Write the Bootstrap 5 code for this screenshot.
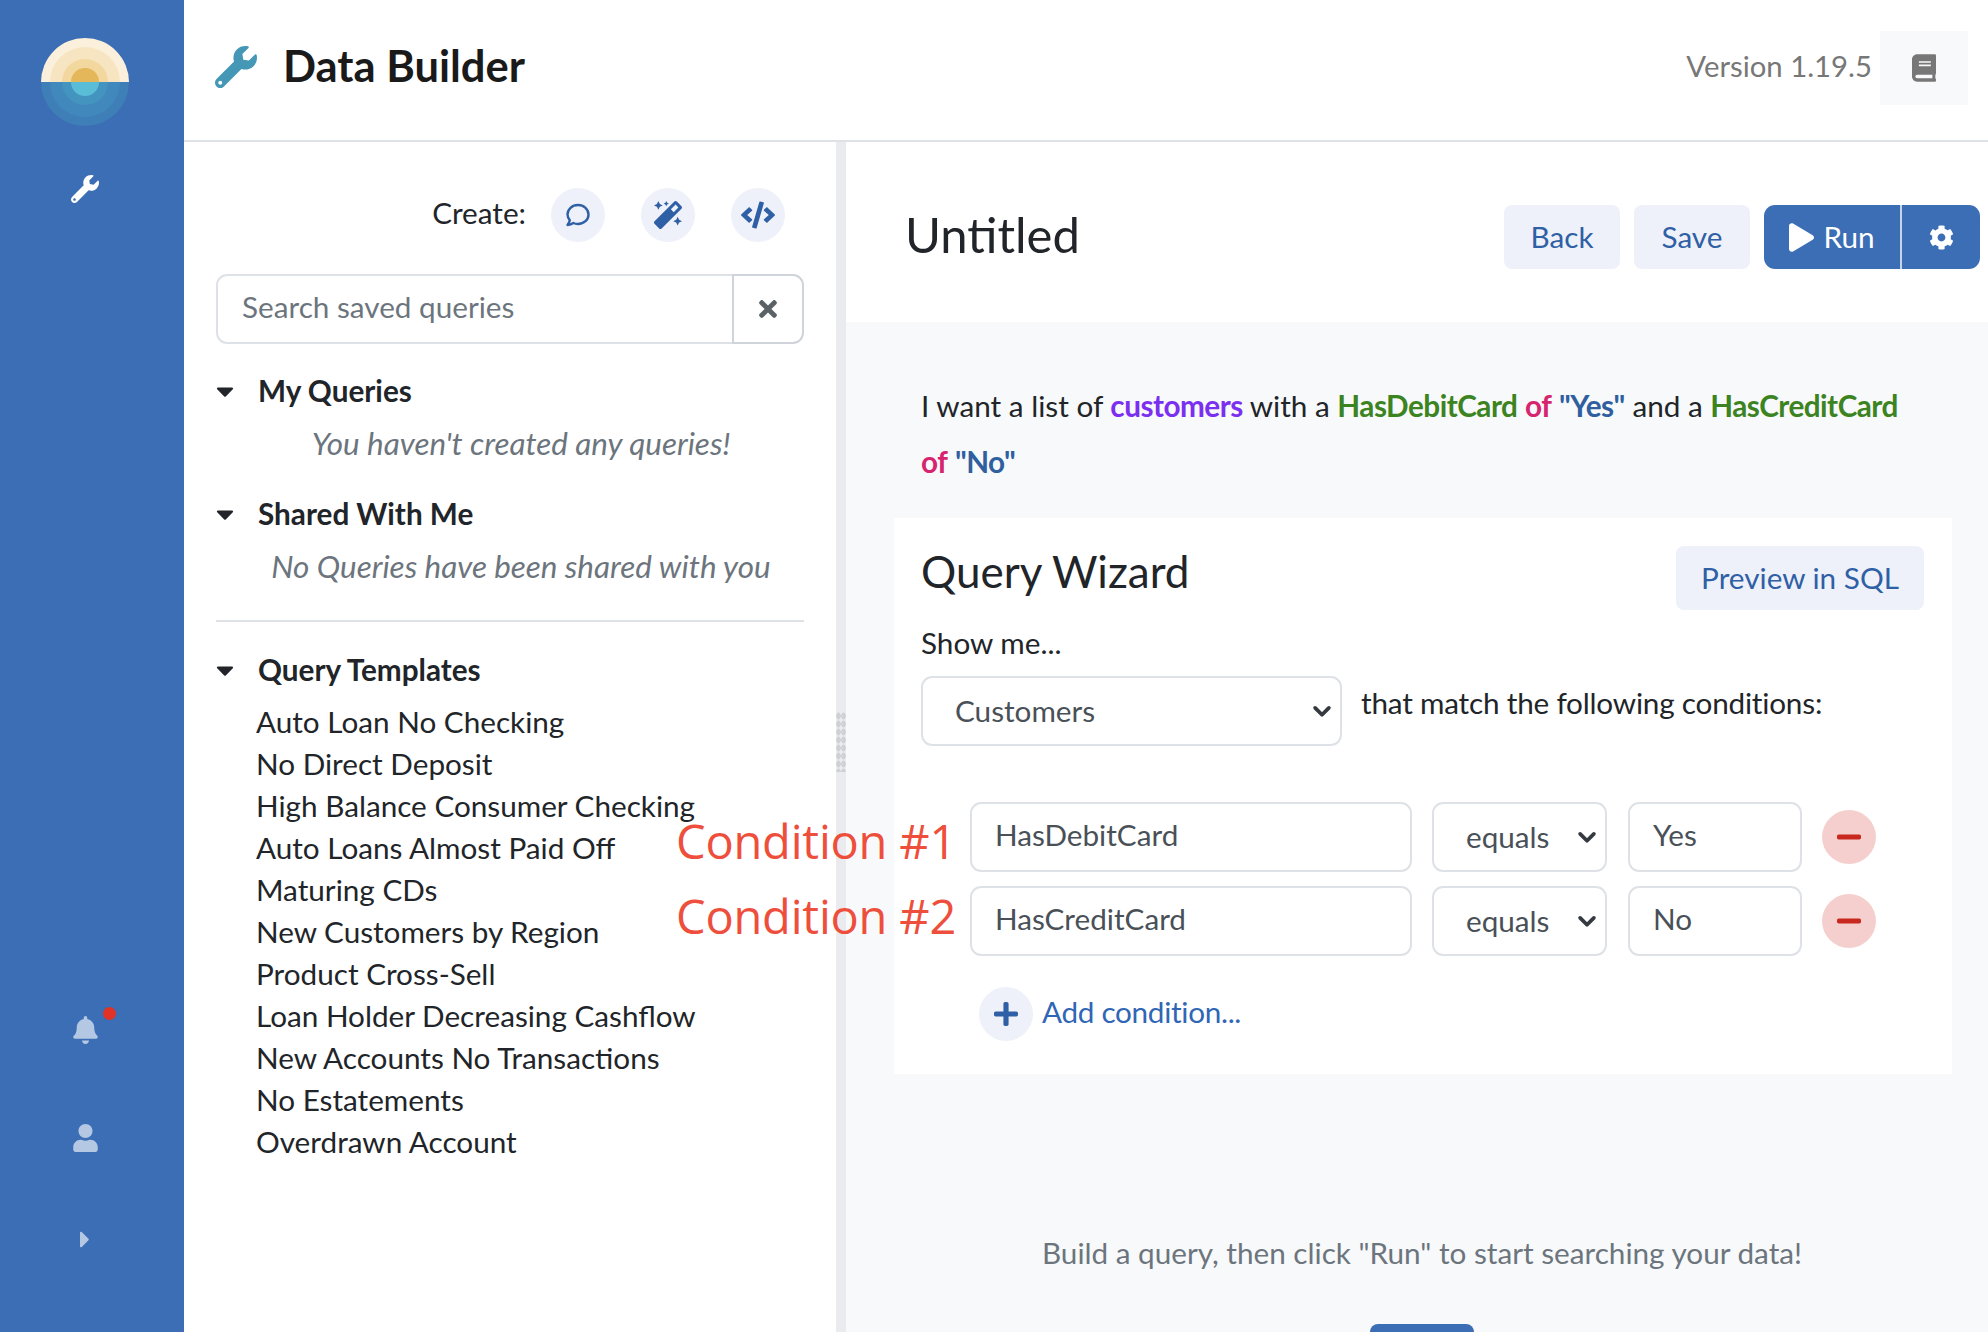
<!DOCTYPE html>
<html lang="en">
<head>
  <meta charset="UTF-8" />
  <title>Data Builder</title>
  <link href="https://cdn.jsdelivr.net/npm/bootstrap@5.3.2/dist/css/bootstrap.min.css" rel="stylesheet" />
  <style>
    html { font-size: 29.7px; }
    :root { --bs-border-width: 2px; --bs-border-radius: 8px; }
    body {
      font-family: "Lato", "Liberation Sans", sans-serif;
      color: #212529;
      height: 1332px;
      position: relative;
    }
    svg { fill: currentColor; display: block; }

    /* left rail */
    .rail { width: 184px; padding-right: 14px; background: #3b6eb4; color: #b5c8e3; }
    .rail-logo { margin-top: 38px; width: 88px; height: 88px; flex: none; }
    .rail-tool { margin-top: 49px; color: #fff; width: 28px; height: 28px; }
    .rail-bell { width: 25px; height: 28px; }
    .bell-wrap { position: relative; margin-top: auto; }
    .bell-dot { position: absolute; left: 30px; top: -9px; width: 13px; height: 13px; border-radius: 50%; background: #e03226; }
    .rail-user { width: 25px; height: 28px; margin-top: 80px; }
    .rail-more { width: 10px; height: 27px; margin-top: 74px; margin-bottom: 79px; }

    /* header */
    .top-bar { height: 142px; border-bottom: 2px solid #dee2e6; padding: 0 20px 4px 31px; }
    .top-tool { width: 42px; height: 42px; color: #4497b5; margin: 0 26px 3px 0; }
    .top-title { font-size: 43.5px; font-weight: 700; color: #1a1a1a; margin: 0 0 6px; }
    .top-version { color: #777; margin: 0 8px 4px 0; font-size: 29.3px; }
    .top-book { width: 88px; height: 74px; background: #f8f9fa; color: #777; border: 0; }
    .top-book svg { width: 24px; height: 28px; }

    /* saved queries */
    .saved-pane { width: 652px; padding: 46px 32px 0; }
    .create-row { margin-right: 19px; gap: 36px; }
    .create-label { margin: 0 -11px 4px 0; line-height: 40px; }
    .round-btn { width: 54px; height: 54px; border-radius: 50%; background: #eef1f9; color: #2f5fa5; border: 0; padding: 0; flex: none; }
    .round-btn svg { width: 28px; height: 28px; }
    .round-btn .wide-ic { width: 34px; }
    .search-box { margin-top: 32px; height: 70px; }
    .search-box .form-control { padding-left: 24px; height: 70px; color: #495057; }
    .search-box .form-control::placeholder { color: #6c757d; }
    .search-clear { width: 72px; border: 2px solid #ced4da; color: #5a6268; background: #fff; padding: 0; }
    .search-clear svg { width: 18px; height: 26px; margin: 0 auto; }
    .tree-head { font-weight: 700; line-height: 42px; }
    .tree-head svg { width: 18px; height: 28px; margin-right: 24px; color: #212529; }
    .tree-empty { font-style: italic; font-size: 31.4px; color: #6c757d; text-align: center; padding-left: 22px; line-height: 42px; margin-top: 10px; }
    .pane-rule { border-top: 2px solid #dee2e6; margin: 33px 0 27px; }
    .tmpl-list { margin: 10px 0 0; padding-left: 40px; list-style: none; line-height: 42px; }

    /* splitter */
    .splitter { width: 10px; background: #e9ebef; position: relative; }
    .grip { position: absolute; left: 0; right: 0; top: 570px; height: 60px; background: radial-gradient(#cfd1d5 55%, transparent 70%) 0 0 / 5px 8px; }

    /* builder */
    .work-pane { background: #f8f9fa; }
    .work-head { height: 180px; background: #fff; padding: 10px 8px 0 59px; }
    .work-title { font-size: 49px; font-weight: 400; margin: 0 0 5px; }
    .soft-btn { background: #eef1f9; color: #2f5fa5; border: 0; height: 64px; width: 116px; margin-right: 14px; border-radius: 8px; padding: 0; }
    .run-group { width: 216px; height: 64px; }
    .run-group .btn { background: #3b6eb4; color: #fff; border: 0; padding: 0; flex: none; }
    .run-main { width: 138px; border-right: 2px solid #c6d4e8 !important; }
    .run-main svg { width: 25px; height: 29px; margin-right: 9px; }
    .run-group .run-gear { margin-left: 0 !important; width: 78px; }
    .run-gear svg { width: 25px; height: 25px; margin: 0 auto; }
    .sentence { padding: 56px 80px 0 75px; line-height: 56px; }
    .w-noun, .w-field, .w-op, .w-val { font-weight: 700; letter-spacing: -.5px; }
    .w-noun { color: #7b2ff0; }
    .w-field { color: #3c8321; }
    .w-op { color: #d6246e; }
    .w-val { color: #2f5f9f; }
    .wizard { margin: 28px 36px 0 48px; height: 556px; background: #fff; padding: 28px 28px 0 27px; }
    .wizard-title { font-size: 44px; font-weight: 400; margin: -1px 0 0; }
    .preview-btn { height: 64px; width: 248px; background: #eef1f9; color: #2f5fa5; border: 0; border-radius: 8px; padding: 0; }
    .show-label { margin-top: 12px; line-height: 42px; }
    .source-row { margin-top: 12px; gap: 19px; }
    .source-row .form-select { width: 421px; flex: none; }
    .form-select {
      height: 70px; padding-left: 32px; padding-right: 30px; color: #495057;
      background-image: url("data:image/svg+xml,%3csvg xmlns='http://www.w3.org/2000/svg' viewBox='0 0 16 16'%3e%3cpath fill='none' stroke='%23343a40' stroke-linecap='round' stroke-linejoin='round' stroke-width='3' d='M2.500 5.500l5.500 5.500 5.500-5.500'/%3e%3c/svg%3e");
      background-size: 20px 20px; background-position: right 8px center;
    }
    .source-row span { margin-top: 6px; line-height: 42px; letter-spacing: -.2px; }
    .cond-list { margin: 56px 0 0 49px; gap: 14px; }
    .cond-row { gap: 21px; align-items: center; }
    .form-control { height: 70px; color: #495057; padding: 4px 12px 10px 23px; }
    .cond-field { width: 442px; flex: none; margin-right: -1px; }
    .cond-op { width: 175px; flex: none; padding: 8px 30px 8px 32px; }
    .cond-val { width: 174px; flex: none; margin-right: -1px; }
    .del-btn { background: #f5cfcd; color: #c9281f; }
    .del-btn svg { width: 24px; margin: 0 auto; }
    .add-row { margin: 31px 0 0 58px; gap: 9px; color: #2f66b5; }
    .add-row span { margin-bottom: 4px; letter-spacing: -.3px; }
    .add-btn svg { width: 24px; margin: 0 auto; }
    .empty-note { margin-top: 158px; color: #6c757d; line-height: 42px; padding-left: 10px; }
    .big-action { width: 104px; height: 60px; margin: 50px auto 0; background: #3b6eb4; border-radius: 8px 8px 0 0; position: relative; left: 5px; }

    /* annotations over the page */
    .note-red { position: absolute; left: 676px; font-family: "Open Sans", sans-serif; font-size: 47px; letter-spacing: -.2px; line-height: 60px; color: #ee4f3c; white-space: nowrap; }
    .note-1 { top: 811px; }
    .note-2 { top: 886px; }
  </style>
</head>
<body class="d-flex overflow-hidden">

  <!-- rail -->
  <aside class="rail d-flex flex-column align-items-center flex-shrink-0">
    <svg class="rail-logo" viewBox="-44 -44 88 88">
      <path fill="#fbf0dc" d="M-44 0A44 44 0 0 1 44 0Z"/>
      <path fill="#f7e5c1" d="M-35 0A35 35 0 0 1 35 0Z"/>
      <path fill="#f2d89e" d="M-23 0A23 23 0 0 1 23 0Z"/>
      <path fill="#e3b75a" d="M-14 0A14 14 0 0 1 14 0Z"/>
      <path fill="#3f7fb8" d="M-44 0A44 44 0 0 0 44 0Z"/>
      <path fill="#4188bc" d="M-35 0A35 35 0 0 0 35 0Z"/>
      <path fill="#4494c0" d="M-23 0A23 23 0 0 0 23 0Z"/>
      <path fill="#59bdd8" d="M-14 0A14 14 0 0 0 14 0Z"/>
    </svg>
    <svg class="rail-tool" viewBox="0 0 512 512"><path d="M507.73 109.1c-2.24-9.03-13.54-12.09-20.12-5.51l-74.36 74.36-67.88-11.31-11.31-67.88 74.36-74.36c6.62-6.62 3.43-17.9-5.66-20.16-47.38-11.74-99.55.91-136.58 37.93-39.64 39.64-50.55 97.1-34.05 147.2L18.74 402.76c-24.99 24.99-24.99 65.51 0 90.5 24.99 24.99 65.51 24.99 90.5 0l213.21-213.21c50.12 16.71 107.47 5.68 147.37-34.22 37.07-37.07 49.7-89.32 37.91-136.73zM64 472c-13.25 0-24-10.75-24-24 0-13.26 10.75-24 24-24s24 10.74 24 24c0 13.25-10.75 24-24 24z"/></svg>
    <div class="bell-wrap">
      <svg class="rail-bell" viewBox="0 0 448 512"><path d="M224 512c35.32 0 63.97-28.65 63.97-64H160.03c0 35.35 28.65 64 63.97 64zm215.39-149.71c-19.32-20.76-55.47-51.99-55.47-154.29 0-77.7-54.48-139.9-127.94-155.16V32c0-17.67-14.32-32-31.98-32s-31.98 14.33-31.98 32v20.84C118.56 68.1 64.08 130.3 64.08 208c0 102.3-36.15 133.53-55.47 154.29-6 6.45-8.66 14.16-8.61 21.71.11 16.4 12.98 32 32.1 32h383.8c19.12 0 32-15.6 32.1-32 .05-7.55-2.61-15.27-8.61-21.71z"/></svg>
      <span class="bell-dot"></span>
    </div>
    <svg class="rail-user" viewBox="0 0 448 512"><path d="M224 256c70.7 0 128-57.3 128-128S294.7 0 224 0 96 57.3 96 128s57.3 128 128 128zm89.6 32h-16.7c-22.2 10.2-46.9 16-72.9 16s-50.6-5.8-72.9-16h-16.7C60.2 288 0 348.2 0 422.4V464c0 26.5 21.5 48 48 48h352c26.5 0 48-21.5 48-48v-41.6c0-74.2-60.2-134.4-134.4-134.4z"/></svg>
    <svg class="rail-more" viewBox="0 0 192 512"><path d="M0 384.662V127.338c0-17.818 21.543-26.741 34.142-14.142l128.662 128.662c7.81 7.81 7.81 20.474 0 28.284L34.142 398.804C21.543 411.404 0 402.48 0 384.662z"/></svg>
  </aside>

  <main class="d-flex flex-column flex-grow-1" style="min-width:0">
    <header class="top-bar d-flex align-items-center flex-shrink-0">
      <svg class="top-tool" viewBox="0 0 512 512"><path d="M507.73 109.1c-2.24-9.03-13.54-12.09-20.12-5.51l-74.36 74.36-67.88-11.31-11.31-67.88 74.36-74.36c6.62-6.62 3.43-17.9-5.66-20.16-47.38-11.74-99.55.91-136.58 37.93-39.64 39.64-50.55 97.1-34.05 147.2L18.74 402.76c-24.99 24.99-24.99 65.51 0 90.5 24.99 24.99 65.51 24.99 90.5 0l213.21-213.21c50.12 16.71 107.47 5.68 147.37-34.22 37.07-37.07 49.7-89.32 37.91-136.73zM64 472c-13.25 0-24-10.75-24-24 0-13.26 10.75-24 24-24s24 10.74 24 24c0 13.25-10.75 24-24 24z"/></svg>
      <h1 class="top-title">Data Builder</h1>
      <span class="top-version ms-auto">Version 1.19.5</span>
      <button class="top-book d-flex align-items-center justify-content-center">
        <svg viewBox="0 0 448 512"><path d="M448 360V24c0-13.3-10.7-24-24-24H96C43 0 0 43 0 96v320c0 53 43 96 96 96h328c13.3 0 24-10.7 24-24v-16c0-7.5-3.5-14.3-8.9-18.7-4.2-15.4-4.2-59.3 0-74.7 5.4-4.3 8.9-11.1 8.9-18.6zM128 134c0-3.3 2.7-6 6-6h212c3.3 0 6 2.7 6 6v20c0 3.3-2.7 6-6 6H134c-3.3 0-6-2.7-6-6v-20zm0 64c0-3.3 2.7-6 6-6h212c3.3 0 6 2.7 6 6v20c0 3.3-2.7 6-6 6H134c-3.3 0-6-2.7-6-6v-20zm253.4 250H96c-17.7 0-32-14.3-32-32 0-17.6 14.4-32 32-32h285.4c-1.9 17.1-1.9 46.9 0 64z"/></svg>
      </button>
    </header>

    <div class="d-flex flex-grow-1" style="min-height:0">
      <!-- saved queries -->
      <section class="saved-pane flex-shrink-0">
        <div class="create-row d-flex align-items-center justify-content-end">
          <span class="create-label">Create:</span>
          <button class="round-btn d-flex align-items-center justify-content-center">
            <svg viewBox="0 0 28 28" style="fill:none;stroke:currentColor;stroke-width:2.4;stroke-linejoin:round"><path d="M14 4c6 0 10.5 4.2 10.5 9.5S20 23 14 23c-1.7 0-3.300-.3-4.700-1-1.400 1-3.300 1.800-5.800 2 1.200-1.500 2-3 2.300-4.700C4.600 17.600 3.500 15.700 3.500 13.500 3.500 8.200 8 4 14 4z"/></svg>
          </button>
          <button class="round-btn d-flex align-items-center justify-content-center">
            <svg viewBox="0 0 512 512"><path d="M224 96l16-32 32-16-32-16-16-32-16 32-32 16 32 16 16 32zM80 160l26.66-53.33L160 80l-53.34-26.67L80 0 53.34 53.33 0 80l53.34 26.67L80 160zm352 128l-26.66 53.33L352 368l53.34 26.67L432 448l26.66-53.33L512 368l-53.34-26.67L432 288zm70.62-193.77L417.77 9.38C411.53 3.12 403.34 0 395.15 0c-8.19 0-16.38 3.12-22.63 9.38L9.38 372.52c-12.5 12.5-12.5 32.76 0 45.25l84.85 84.85c6.25 6.25 14.44 9.37 22.62 9.37 8.19 0 16.38-3.12 22.63-9.37l363.14-363.15c12.5-12.48 12.5-32.75 0-45.24zM359.45 203.46l-50.91-50.91 86.6-86.6 50.91 50.91-86.6 86.6z"/></svg>
          </button>
          <button class="round-btn d-flex align-items-center justify-content-center">
            <svg class="wide-ic" viewBox="0 0 640 512"><path d="M278.9 511.5l-61-17.7c-6.4-1.8-10-8.5-8.2-14.9L346.2 8.7c1.8-6.4 8.5-10 14.9-8.2l61 17.7c6.4 1.8 10 8.5 8.2 14.9L293.8 503.3c-1.9 6.4-8.5 10.1-14.9 8.2zm-114-112.2l43.5-46.4c4.6-4.9 4.3-12.7-.8-17.2L117 256l90.6-79.7c5.1-4.5 5.5-12.3.8-17.2l-43.5-46.4c-4.5-4.8-12.1-5.1-17-.5L3.8 247.2c-5.1 4.7-5.1 12.8 0 17.5l144.1 135.1c4.9 4.6 12.5 4.4 17-.5zm327.2.6l144.1-135.1c5.1-4.7 5.1-12.8 0-17.5L492.1 112.1c-4.8-4.5-12.4-4.3-17 .5L431.6 159c-4.6 4.9-4.3 12.7.8 17.2L523 256l-90.6 79.7c-5.1 4.5-5.5 12.3-.8 17.2l43.5 46.4c4.5 4.9 12.1 5.1 17 .6z"/></svg>
          </button>
        </div>

        <div class="input-group search-box">
          <input type="text" class="form-control" placeholder="Search saved queries" />
          <button class="btn search-clear" type="button">
            <svg viewBox="0 0 352 512"><path d="M242.72 256l100.07-100.07c12.28-12.28 12.28-32.19 0-44.48l-22.24-22.24c-12.28-12.28-32.19-12.28-44.48 0L176 189.28 75.93 89.21c-12.28-12.28-32.19-12.28-44.48 0L9.21 111.45c-12.28 12.28-12.28 32.19 0 44.48L109.28 256 9.21 356.07c-12.28 12.28-12.28 32.19 0 44.48l22.24 22.24c12.28 12.28 32.2 12.28 44.48 0L176 322.72l100.07 100.07c12.28 12.28 32.2 12.28 44.48 0l22.24-22.24c12.28-12.28 12.28-32.19 0-44.48L242.72 256z"/></svg>
          </button>
        </div>

        <div class="tree-head d-flex align-items-center" style="margin-top:26px">
          <svg viewBox="0 0 320 512"><path d="M31.3 192h257.3c17.8 0 26.7 21.5 14.1 34.1L174.1 354.8c-7.8 7.8-20.5 7.8-28.3 0L17.2 226.1C4.6 213.5 13.5 192 31.3 192z"/></svg>My Queries
        </div>
        <div class="tree-empty">You haven't created any queries!</div>

        <div class="tree-head d-flex align-items-center" style="margin-top:29px">
          <svg viewBox="0 0 320 512"><path d="M31.3 192h257.3c17.8 0 26.7 21.5 14.1 34.1L174.1 354.8c-7.8 7.8-20.5 7.8-28.3 0L17.2 226.1C4.6 213.5 13.5 192 31.3 192z"/></svg>Shared With Me
        </div>
        <div class="tree-empty">No Queries have been shared with you</div>

        <div class="pane-rule"></div>

        <div class="tree-head d-flex align-items-center">
          <svg viewBox="0 0 320 512"><path d="M31.3 192h257.3c17.8 0 26.7 21.5 14.1 34.1L174.1 354.8c-7.8 7.8-20.5 7.8-28.3 0L17.2 226.1C4.6 213.5 13.5 192 31.3 192z"/></svg>Query Templates
        </div>
        <ul class="tmpl-list">
          <li>Auto Loan No Checking</li>
          <li>No Direct Deposit</li>
          <li>High Balance Consumer Checking</li>
          <li>Auto Loans Almost Paid Off</li>
          <li>Maturing CDs</li>
          <li>New Customers by Region</li>
          <li>Product Cross-Sell</li>
          <li>Loan Holder Decreasing Cashflow</li>
          <li>New Accounts No Transactions</li>
          <li>No Estatements</li>
          <li>Overdrawn Account</li>
        </ul>
      </section>

      <div class="splitter flex-shrink-0"><div class="grip"></div></div>

      <!-- builder -->
      <section class="work-pane flex-grow-1 d-flex flex-column overflow-hidden">
        <div class="work-head d-flex align-items-center flex-shrink-0">
          <h2 class="work-title">Untitled</h2>
          <button class="btn soft-btn ms-auto">Back</button>
          <button class="btn soft-btn">Save</button>
          <div class="btn-group run-group">
            <button class="btn run-main d-flex align-items-center justify-content-center">
              <svg viewBox="0 0 448 512"><path d="M424.4 214.7L72.4 6.6C43.8-10.3 0 6.1 0 47.9V464c0 37.5 40.7 60.1 72.4 41.3l352-208c31.4-18.5 31.5-64.1 0-82.6z"/></svg>Run
            </button>
            <button class="btn run-gear">
              <svg viewBox="0 0 512 512"><path d="M487.4 315.7l-42.6-24.6c4.3-23.2 4.3-47 0-70.2l42.6-24.6c4.9-2.8 7.1-8.6 5.5-14-11.1-35.6-30-67.8-54.7-94.6-3.8-4.1-10-5.1-14.8-2.3L380.8 110c-17.9-15.4-38.5-27.3-60.8-35.1V25.8c0-5.6-3.9-10.5-9.4-11.7-36.7-8.2-74.3-7.8-109.2 0-5.5 1.2-9.4 6.1-9.4 11.7V75c-22.2 7.9-42.8 19.8-60.8 35.1L88.7 85.5c-4.9-2.8-11-1.9-14.8 2.3-24.7 26.7-43.6 58.9-54.7 94.6-1.7 5.4.6 11.2 5.5 14L67.3 221c-4.3 23.2-4.3 47 0 70.2l-42.6 24.6c-4.9 2.8-7.1 8.6-5.5 14 11.1 35.6 30 67.8 54.7 94.6 3.8 4.1 10 5.1 14.8 2.3l42.6-24.6c17.9 15.4 38.5 27.3 60.8 35.1v49.2c0 5.6 3.9 10.5 9.4 11.7 36.7 8.2 74.3 7.8 109.2 0 5.5-1.2 9.4-6.1 9.4-11.7v-49.2c22.2-7.9 42.8-19.8 60.8-35.1l42.6 24.6c4.9 2.8 11 1.9 14.8-2.3 24.7-26.7 43.6-58.9 54.7-94.6 1.5-5.5-.7-11.3-5.6-14.1zM256 336c-44.1 0-80-35.9-80-80s35.9-80 80-80 80 35.9 80 80-35.9 80-80 80z"/></svg>
            </button>
          </div>
        </div>

        <p class="sentence mb-0">I want a list of <span class="w-noun">customers</span> with a <span class="w-field">HasDebitCard</span> <span class="w-op">of</span> <span class="w-val">"Yes"</span> and a <span class="w-field">HasCreditCard</span> <span class="w-op">of</span> <span class="w-val">"No"</span></p>

        <div class="wizard flex-shrink-0">
          <div class="d-flex justify-content-between align-items-start">
            <h3 class="wizard-title">Query Wizard</h3>
            <button class="btn preview-btn">Preview in SQL</button>
          </div>
          <div class="show-label">Show me...</div>
          <div class="source-row d-flex align-items-start">
            <select class="form-select"><option>Customers</option></select>
            <span>that match the following conditions:</span>
          </div>

          <div class="cond-list d-flex flex-column">
            <div class="cond-row d-flex">
              <input class="form-control cond-field" value="HasDebitCard" />
              <select class="form-select cond-op"><option>equals</option></select>
              <input class="form-control cond-val" value="Yes" />
              <button class="round-btn del-btn d-flex align-items-center justify-content-center">
                <svg viewBox="0 0 448 512"><path d="M416 208H32c-17.67 0-32 14.33-32 32v32c0 17.67 14.33 32 32 32h384c17.67 0 32-14.33 32-32v-32c0-17.67-14.33-32-32-32z"/></svg>
              </button>
            </div>
            <div class="cond-row d-flex">
              <input class="form-control cond-field" value="HasCreditCard" />
              <select class="form-select cond-op"><option>equals</option></select>
              <input class="form-control cond-val" value="No" />
              <button class="round-btn del-btn d-flex align-items-center justify-content-center">
                <svg viewBox="0 0 448 512"><path d="M416 208H32c-17.67 0-32 14.33-32 32v32c0 17.67 14.33 32 32 32h384c17.67 0 32-14.33 32-32v-32c0-17.67-14.33-32-32-32z"/></svg>
              </button>
            </div>
          </div>

          <div class="add-row d-flex align-items-center">
            <button class="round-btn add-btn d-flex align-items-center justify-content-center">
              <svg viewBox="0 0 448 512"><path d="M416 208H272V64c0-17.67-14.33-32-32-32h-32c-17.67 0-32 14.33-32 32v144H32c-17.67 0-32 14.33-32 32v32c0 17.67 14.33 32 32 32h144v144c0 17.67 14.33 32 32 32h32c17.67 0 32-14.33 32-32V304h144c17.67 0 32-14.33 32-32v-32c0-17.67-14.33-32-32-32z"/></svg>
            </button>
            <span>Add condition...</span>
          </div>
        </div>

        <div class="empty-note text-center">Build a query, then click "Run" to start searching your data!</div>
        <div class="big-action flex-shrink-0"></div>
      </section>
    </div>
  </main>

  <div class="note-red note-1">Condition #1</div>
  <div class="note-red note-2">Condition #2</div>

  <script src="https://cdn.jsdelivr.net/npm/bootstrap@5.3.2/dist/js/bootstrap.bundle.min.js"></script>
</body>
</html>
